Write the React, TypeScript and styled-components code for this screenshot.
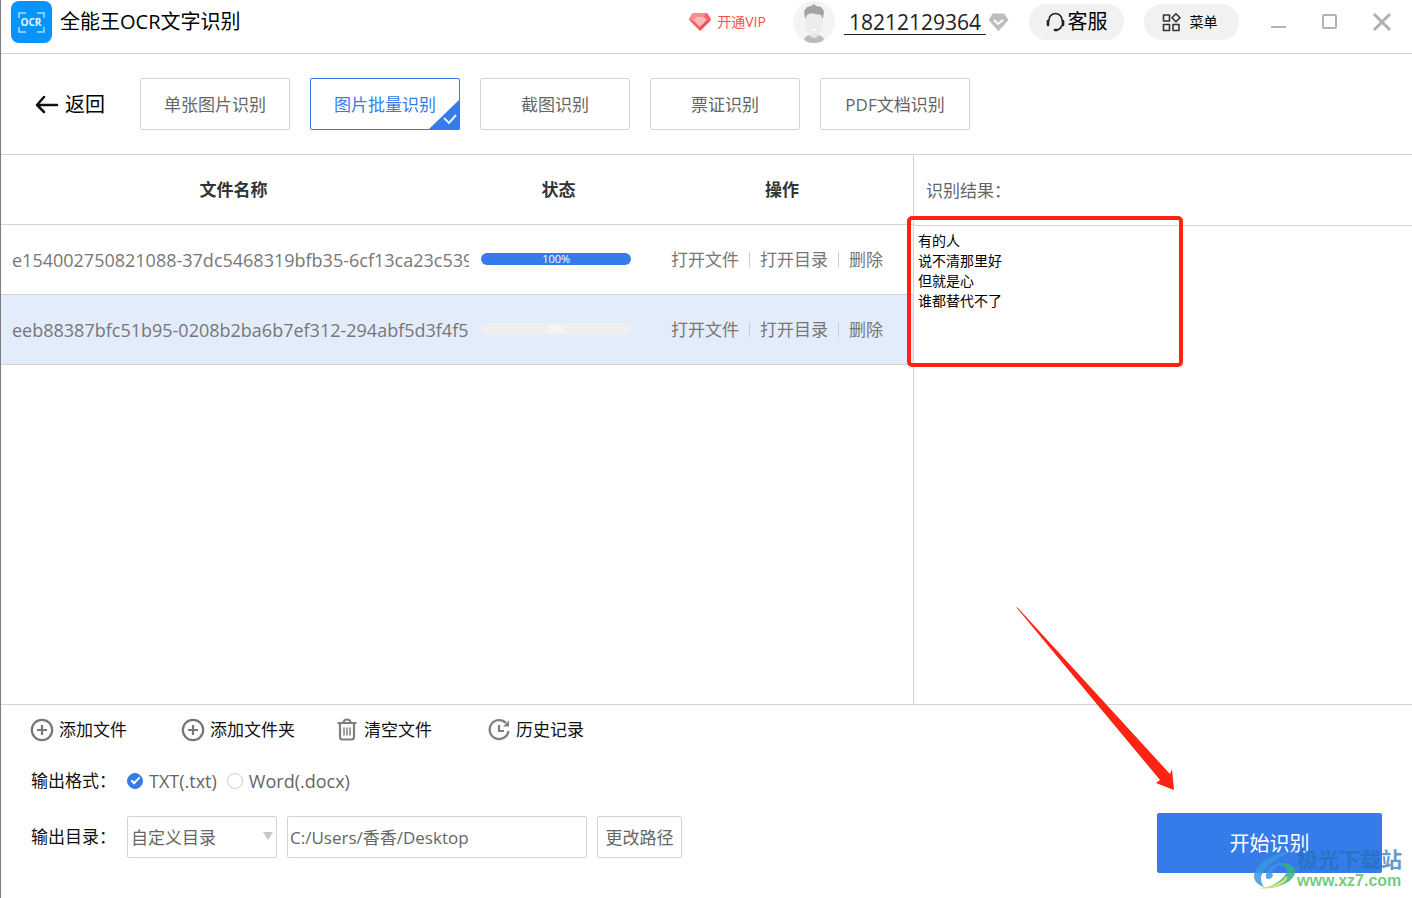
import React, { useState } from "react";
import styled, { createGlobalStyle } from "styled-components";

const line = "#d3d3d3";
const blue = "#357bea";
const red = "#ff2314";

const GlobalStyle = createGlobalStyle`
  *, *::before, *::after { box-sizing: border-box; }
  body {
    margin: 0;
    background: #fff;
    color: #111;
    font-family: "Open Sans", "Noto Sans CJK SC", sans-serif;
    font-size: 17px;
    line-height: 24px;
  }
  button, input, select, textarea { font: inherit; color: inherit; }
  button { padding: 0; border: 0; background: none; cursor: pointer; white-space: nowrap; }
`;

const Window = styled.div`
  position: relative;
  display: flex;
  flex-direction: column;
  min-height: 100vh;
  min-width: 1120px;
  overflow: hidden;
  border-left: 1px solid #7d7d7d;
`;

/* Title bar */
const TitleBar = styled.header`
  display: flex;
  align-items: center;
  justify-content: space-between;
  height: 54px;
  padding: 0 20px 9px 10px;
  border-bottom: 1px solid ${line};
`;
const Brand = styled.h1`
  display: flex;
  align-items: center;
  gap: 8px;
  margin: 0;
  font-size: 20px;
  font-weight: 400;
  color: #000;
`;
const TitleTools = styled.div`
  display: flex;
  align-items: center;
`;
const VipButton = styled.button`
  display: flex;
  align-items: center;
  gap: 6px;
  margin-right: 27px;
  font-size: 14px;
  color: #ff4b4b;
`;
const Account = styled.div`
  display: flex;
  align-items: center;
  margin-right: 20px;
`;
const Phone = styled.a`
  margin: 0 2px 0 9px;
  padding: 0 5px 0 5px;
  border-bottom: 1px solid #222;
  font-size: 21px;
  color: #222;
  text-decoration: none;
`;
const Pill = styled.button<{ $small?: boolean }>`
  display: flex;
  align-items: center;
  justify-content: center;
  gap: ${(p) => (p.$small ? 9 : 3)}px;
  width: 95px;
  height: 36px;
  padding-right: ${(p) => (p.$small ? 4 : 0)}px;
  border-radius: 18px;
  background: #f1f1f1;
  color: #000;
  font-size: ${(p) => (p.$small ? 14 : 20)}px;
  & + & { margin-left: 20px; }
`;
const WindowControls = styled.div`
  display: flex;
  gap: 32px;
  margin-left: 29px;
`;
const ControlButton = styled.button`
  width: 20px;
  height: 20px;
  svg { display: block; }
`;

/* Mode tabs */
const ModeBar = styled.nav`
  display: flex;
  align-items: center;
  gap: 20px;
  padding: 24px 34px;
  border-bottom: 1px solid ${line};
`;
const BackButton = styled.button`
  display: flex;
  align-items: center;
  gap: 6px;
  margin-right: 15px;
  padding-top: 2px;
  font-size: 20px;
  color: #000;
`;
const ModeButton = styled.button<{ $active: boolean }>`
  position: relative;
  width: 150px;
  height: 52px;
  padding-top: 2px;
  border: 1px solid ${(p) => (p.$active ? blue : line)};
  border-radius: 2px;
  color: ${(p) => (p.$active ? blue : "#666")};
`;
const CornerMark = styled.svg`
  position: absolute;
  right: -1px;
  bottom: -1px;
`;

/* Work area */
const Work = styled.main`
  flex: 1;
  display: grid;
  grid-template-columns: minmax(0, 912fr) minmax(0, 499fr);
`;
const FileTable = styled.table`
  width: 100%;
  table-layout: fixed;
  border-collapse: separate;
  border-spacing: 0;
  color: #777;
  th, td { height: 70px; padding: 0; border-bottom: 1px solid ${line}; }
  th { padding-top: 1px; color: #333; font-weight: 700; }
  th:nth-child(1) { width: 51%; }
  th:nth-child(2) { width: 185px; }
`;
const FileRow = styled.tr<{ $selected: boolean }>`
  background: ${(p) => (p.$selected ? "#e3ecfb" : "#fff")};
`;
const FileName = styled.div`
  margin: 0 -3px 0 11px;
  overflow: hidden;
  white-space: nowrap;
  font-size: 18px;
`;
const Progress = styled.div`
  position: relative;
  height: 12px;
  margin: 0 20px 2px 15px;
  border-radius: 6px;
  background: #efefef;
`;
const ProgressFill = styled.div`
  height: 100%;
  border-radius: 6px;
  background: ${blue};
`;
const ProgressText = styled.span`
  position: absolute;
  inset: 0;
  text-align: center;
  font-size: 11px;
  line-height: 12px;
  color: #fff;
`;
const RowActions = styled.div`
  display: flex;
  align-items: center;
  padding-left: 20px;
  button + button::before {
    content: "";
    display: inline-block;
    width: 1px;
    height: 15px;
    margin: 0 10px;
    background: #ccc;
    vertical-align: -1px;
  }
`;
const ResultPane = styled.section`
  position: relative;
  display: flex;
  flex-direction: column;
  border-left: 1px solid ${line};
`;
const ResultLabel = styled.label`
  height: 71px;
  padding: 24px 12px;
  border-bottom: 1px solid ${line};
  color: #666;
`;
const ResultText = styled.textarea`
  flex: 1;
  width: 100%;
  padding: 5px 4px;
  border: 0;
  outline: 0;
  resize: none;
  background: transparent;
  font-size: 14px;
  line-height: 20px;
  color: #000;
`;
const Highlight = styled.div`
  position: absolute;
  top: 61px;
  left: -7px;
  width: 276px;
  height: 151px;
  border: 4px solid ${red};
  border-radius: 5px;
  pointer-events: none;
`;

/* Output settings */
const Footer = styled.footer`
  display: flex;
  align-items: flex-end;
  justify-content: space-between;
  padding: 13px 30px 25px;
  border-top: 1px solid ${line};
`;
const Settings = styled.div`
  display: flex;
  flex-direction: column;
  padding-bottom: 15px;
`;
const FileActions = styled.div`
  display: grid;
  grid-template-columns: 151px 154px 152px auto;
  margin-left: -1px;
`;
const FileAction = styled.button`
  display: flex;
  align-items: center;
  gap: 5px;
`;
const Field = styled.div`
  display: flex;
  align-items: center;
  gap: 10px;
`;
const FormatRow = styled(Field)`
  height: 24px;
  margin: 27px 0 23px;
`;
const FieldLabel = styled.label`
  width: 86px;
`;
const RadioLabel = styled.label`
  display: flex;
  align-items: center;
  gap: 6px;
  color: #666;
  font-size: 18px;
`;
const Radio = styled.input`
  appearance: none;
  display: grid;
  place-items: center;
  width: 16px;
  height: 16px;
  margin: 0;
  border: 1px solid #ccc;
  border-radius: 50%;
  &:checked { border-color: ${blue}; background: ${blue}; }
  &:checked::after {
    content: "";
    width: 9px;
    height: 5px;
    margin-bottom: 3px;
    border: solid #fff;
    border-width: 0 0 2px 2px;
    transform: rotate(-45deg);
  }
`;
const SelectBox = styled.div`
  position: relative;
  &::after {
    content: "";
    position: absolute;
    top: 16px;
    right: 4px;
    border: solid transparent;
    border-width: 8px 5px 0;
    border-top-color: #c8c8c8;
    pointer-events: none;
  }
`;
const Select = styled.select`
  appearance: none;
  display: block;
  width: 150px;
  height: 42px;
  padding: 2px 3px 0;
  border: 1px solid ${line};
  border-radius: 2px;
  background: #fff;
  color: #666;
`;
const PathInput = styled.input`
  width: 300px;
  height: 42px;
  padding: 0 2px 2px;
  border: 1px solid ${line};
  border-radius: 2px;
  color: #666;
`;
const PathButton = styled.button`
  width: 85px;
  height: 42px;
  padding-top: 2px;
  border: 1px solid ${line};
  border-radius: 2px;
  color: #666;
`;
const StartButton = styled.button`
  width: 225px;
  height: 60px;
  padding-top: 2px;
  border-radius: 2px;
  background: ${blue};
  color: #fff;
  font-size: 20px;
`;

/* Overlays */
const Arrow = styled.svg`
  position: absolute;
  right: 237px;
  bottom: 105px;
  pointer-events: none;
`;
const Watermark = styled.div`
  position: absolute;
  right: 10px;
  bottom: 6px;
  display: flex;
  align-items: center;
  pointer-events: none;
`;
const WatermarkText = styled.div`
  font-size: 21px;
  font-weight: 700;
  line-height: 22px;
  color: #2271b8;
  opacity: 0.7;
  small {
    display: block;
    font-family: "Liberation Sans", sans-serif;
    font-size: 16px;
    font-weight: 700;
    color: #3fb549;
  }
`;

const Logo = () => (
  <svg width="41" height="42" viewBox="0 0 41 42" aria-hidden="true">
    <rect width="41" height="42" rx="8" fill="#0794ff" />
    <path d="M8 17v-5h7M26 12h7v5M33 26v5h-7M15 31H8v-5" fill="none" stroke="#a8dbff" strokeWidth="1.500" />
    <text x="20" y="25" textAnchor="middle" fontSize="10" fontWeight="700" fill="#e4f4ff">OCR</text>
  </svg>
);

const VipGem = () => (
  <svg width="22" height="20" viewBox="0 0 22 20" aria-hidden="true">
    <path d="M5 1h12q1 0 2 1l3 5q0 1-1 2l-9 9q-1 1-2 0L1 9Q0 8 0 7l3-5q1-1 2-1z" fill="#fb6068" />
    <path d="M5 1h12l-2 4H7L3 9 0 7l3-5z" fill="#ff8a8e" />
    <path d="M7 5h8l3 3-7 7-7-7z" fill="#ffb9b8" />
    <path d="M18 8l4-1-1 2-10 10v-4z" fill="#f4505c" />
  </svg>
);

const Avatar = () => (
  <svg width="42" height="42" viewBox="0 0 42 42" aria-hidden="true">
    <defs>
      <clipPath id="avatarClip"><circle cx="21" cy="21" r="21" /></clipPath>
    </defs>
    <g clipPath="url(#avatarClip)">
      <rect width="42" height="42" fill="#f4f4f4" />
      <path d="M11 38q2-4 7-4l3 2 3-2q5 0 7 4l-3 4H14z" fill="#bcbcbc" />
      <path d="M17 29h8v6q-4 4-8 0z" fill="#e6e6e6" />
      <path d="M12 14q9-5 18 0v7q0 12-9 13-9-1-9-13z" fill="#ececec" />
      <path d="M12 18l-1-8 3-4 4-1 3-2 2 2 5 1 3 4-1 8-2-4-5-1q-5-2-9 1z" fill="#a3a3a3" />
      <path d="M18 28h6q-3 3-6 0z" fill="#fff" />
    </g>
  </svg>
);

const GreyGem = () => (
  <svg width="21" height="18" viewBox="0 0 21 18" aria-hidden="true">
    <path d="M5 1h11l4 6-9 10q-1 1-1 0L1 7z" fill="#bdbdbd" stroke="#bdbdbd" strokeLinejoin="round" />
    <path d="M6 7l4 4 5-4" fill="none" stroke="#fff" strokeWidth="2" />
  </svg>
);

const Headset = () => (
  <svg width="19" height="20" viewBox="0 0 19 20" fill="none" stroke="#222" aria-hidden="true">
    <path d="M3 9V8a6.500 6.500 0 0 1 13 0v1M16 13q-1 4-5 5" strokeWidth="1.600" />
    <path d="M2 9v4M17 9v4" strokeWidth="2.600" strokeLinecap="round" />
    <path d="M9 18h2" strokeWidth="2.600" strokeLinecap="round" />
  </svg>
);

const MenuGrid = () => (
  <svg width="19" height="19" viewBox="0 0 19 19" fill="none" stroke="#333" strokeWidth="1.600" strokeLinejoin="round" aria-hidden="true">
    <rect x="1.500" y="2" width="6" height="6" />
    <rect x="1.500" y="11.500" width="6" height="6" />
    <rect x="11" y="11.500" width="6" height="6" />
    <path d="M14 .8l4 4-4 4-4-4z" />
  </svg>
);

const PlusCircle = () => (
  <svg width="24" height="24" viewBox="0 0 24 24" fill="none" stroke="#777" strokeWidth="2.200" aria-hidden="true">
    <circle cx="12" cy="12" r="10.200" />
    <path d="M12 7v10M7 12h10" />
  </svg>
);

const Trash = () => (
  <svg width="24" height="24" viewBox="0 0 24 24" fill="none" stroke="#808080" strokeWidth="2.200" aria-hidden="true">
    <path d="M2.500 5h19M8.500 5q0-3.500 3.500-3.500T15.500 5M5 5v14q0 2.500 2.500 2.500h9q2.500 0 2.500-2.500V5" />
    <path d="M9 9.500v8M12 9.500v8M15 9.500v8" strokeWidth="1.500" />
  </svg>
);

const History = () => (
  <svg width="24" height="24" viewBox="0 0 24 24" fill="none" stroke="#808080" strokeWidth="2.200" aria-hidden="true">
    <path d="M19 5A9.500 9.500 0 1 0 21.500 13" />
    <path d="M12 7v6h5" />
    <path d="M22 2.500v6h-6z" fill="#808080" stroke="none" />
  </svg>
);

const Swirl = () => (
  <svg width="44" height="40" viewBox="0 0 44 40" opacity="0.85" aria-hidden="true">
    <path d="M41 1C20 2 2 14 1 26c0 5 4 9 10 11-4-6-4-11 0-16C17 13 28 5 41 1z" fill="#3c98dc" />
    <path d="M13 28c-1-8 7-15 17-15-9 4-12 8-10 13-2 3-5 4-7 2z" fill="#3c98dc" />
    <path d="M22 14c12-3 21 2 20 9-2 9-16 15-29 15 11-4 20-11 21-17 0-5-5-7-12-7z" fill="#36b283" />
    <path d="M5 38c12-1 22-4 29-12 1 3-1 6-5 8-7 5-15 5-24 4z" fill="#c6de62" />
  </svg>
);

const modes = ["单张图片识别", "图片批量识别", "截图识别", "票证识别", "PDF文档识别"];
const files = [
  { name: "e154002750821088-37dc5468319bfb35-6cf13ca23c539", progress: 100 },
  { name: "eeb88387bfc51b95-0208b2ba6b7ef312-294abf5d3f4f5", progress: 0 },
];
const fileActions = [
  { label: "添加文件", Icon: PlusCircle },
  { label: "添加文件夹", Icon: PlusCircle },
  { label: "清空文件", Icon: Trash },
  { label: "历史记录", Icon: History },
];

export default function App() {
  const [mode, setMode] = useState(1);
  const [selected, setSelected] = useState(1);
  const [format, setFormat] = useState("txt");

  return (
    <>
      <GlobalStyle />
      <Window>
        <TitleBar>
          <Brand><Logo />全能王OCR文字识别</Brand>
          <TitleTools>
            <VipButton><VipGem />开通VIP</VipButton>
            <Account>
              <Avatar />
              <Phone href="#account">18212129364</Phone>
              <GreyGem />
            </Account>
            <Pill><Headset />客服</Pill>
            <Pill $small><MenuGrid />菜单</Pill>
            <WindowControls>
              <ControlButton aria-label="最小化">
                <svg width="20" height="20" fill="none" stroke="#b3b3b3" strokeWidth="2"><path d="M3 15h15" /></svg>
              </ControlButton>
              <ControlButton aria-label="最大化">
                <svg width="20" height="20" fill="none" stroke="#b3b3b3" strokeWidth="2"><rect x="3" y="3" width="13" height="13" rx="1" /></svg>
              </ControlButton>
              <ControlButton aria-label="关闭">
                <svg width="20" height="20" fill="none" stroke="#b0b0b0" strokeWidth="3"><path d="M2 2l16 16M18 2L2 18" /></svg>
              </ControlButton>
            </WindowControls>
          </TitleTools>
        </TitleBar>

        <ModeBar>
          <BackButton>
            <svg width="24" height="20" viewBox="0 0 24 20" fill="none" stroke="#111" strokeWidth="2.500" strokeLinecap="round" strokeLinejoin="round" aria-hidden="true">
              <path d="M9 2L2 10l7 7M2 10h20" />
            </svg>
            返回
          </BackButton>
          {modes.map((label, i) => (
            <ModeButton key={label} $active={i === mode} aria-pressed={i === mode} onClick={() => setMode(i)}>
              {label}
              {i === mode && (
                <CornerMark width="32" height="31" viewBox="0 0 32 31" aria-hidden="true">
                  <path d="M32 0v29q0 2-2 2H0z" fill={blue} />
                  <path d="M16 19l5 5 7-8" fill="none" stroke="#e6effd" strokeWidth="2" />
                </CornerMark>
              )}
            </ModeButton>
          ))}
        </ModeBar>

        <Work>
          <div>
            <FileTable>
              <thead>
                <tr><th>文件名称</th><th>状态</th><th>操作</th></tr>
              </thead>
              <tbody>
                {files.map((file, i) => (
                  <FileRow key={file.name} $selected={i === selected} onClick={() => setSelected(i)}>
                    <td><FileName>{file.name}</FileName></td>
                    <td>
                      <Progress role="progressbar" aria-valuenow={file.progress}>
                        <ProgressFill style={{ width: `${file.progress}%` }} />
                        <ProgressText>{file.progress}%</ProgressText>
                      </Progress>
                    </td>
                    <td>
                      <RowActions>
                        <button>打开文件</button>
                        <button>打开目录</button>
                        <button>删除</button>
                      </RowActions>
                    </td>
                  </FileRow>
                ))}
              </tbody>
            </FileTable>
          </div>
          <ResultPane>
            <ResultLabel htmlFor="result">识别结果：</ResultLabel>
            <ResultText id="result" readOnly value={"有的人\n说不清那里好\n但就是心\n谁都替代不了"} />
            <Highlight />
          </ResultPane>
        </Work>

        <Footer>
          <Settings>
            <FileActions>
              {fileActions.map(({ label, Icon }) => (
                <FileAction key={label}><Icon />{label}</FileAction>
              ))}
            </FileActions>
            <FormatRow role="radiogroup" aria-labelledby="format-label">
              <FieldLabel as="span" id="format-label">输出格式：</FieldLabel>
              <RadioLabel>
                <Radio type="radio" name="format" checked={format === "txt"} onChange={() => setFormat("txt")} />
                TXT(.txt)
              </RadioLabel>
              <RadioLabel>
                <Radio type="radio" name="format" checked={format === "docx"} onChange={() => setFormat("docx")} />
                Word(.docx)
              </RadioLabel>
            </FormatRow>
            <Field>
              <FieldLabel htmlFor="target">输出目录：</FieldLabel>
              <SelectBox>
                <Select id="target"><option>自定义目录</option></Select>
              </SelectBox>
              <PathInput aria-label="输出路径" defaultValue="C:/Users/香香/Desktop" />
              <PathButton>更改路径</PathButton>
            </Field>
          </Settings>
          <StartButton>开始识别</StartButton>
        </Footer>

        <Arrow width="160" height="187" viewBox="0 0 160 187" aria-hidden="true">
          <path d="M1 1L3 2 155 168l2-5 2 21-18-7 4-3z" fill={red} />
        </Arrow>
        <Watermark aria-hidden="true">
          <Swirl />
          <WatermarkText>极光下载站<small>www.xz7.com</small></WatermarkText>
        </Watermark>
      </Window>
    </>
  );
}
